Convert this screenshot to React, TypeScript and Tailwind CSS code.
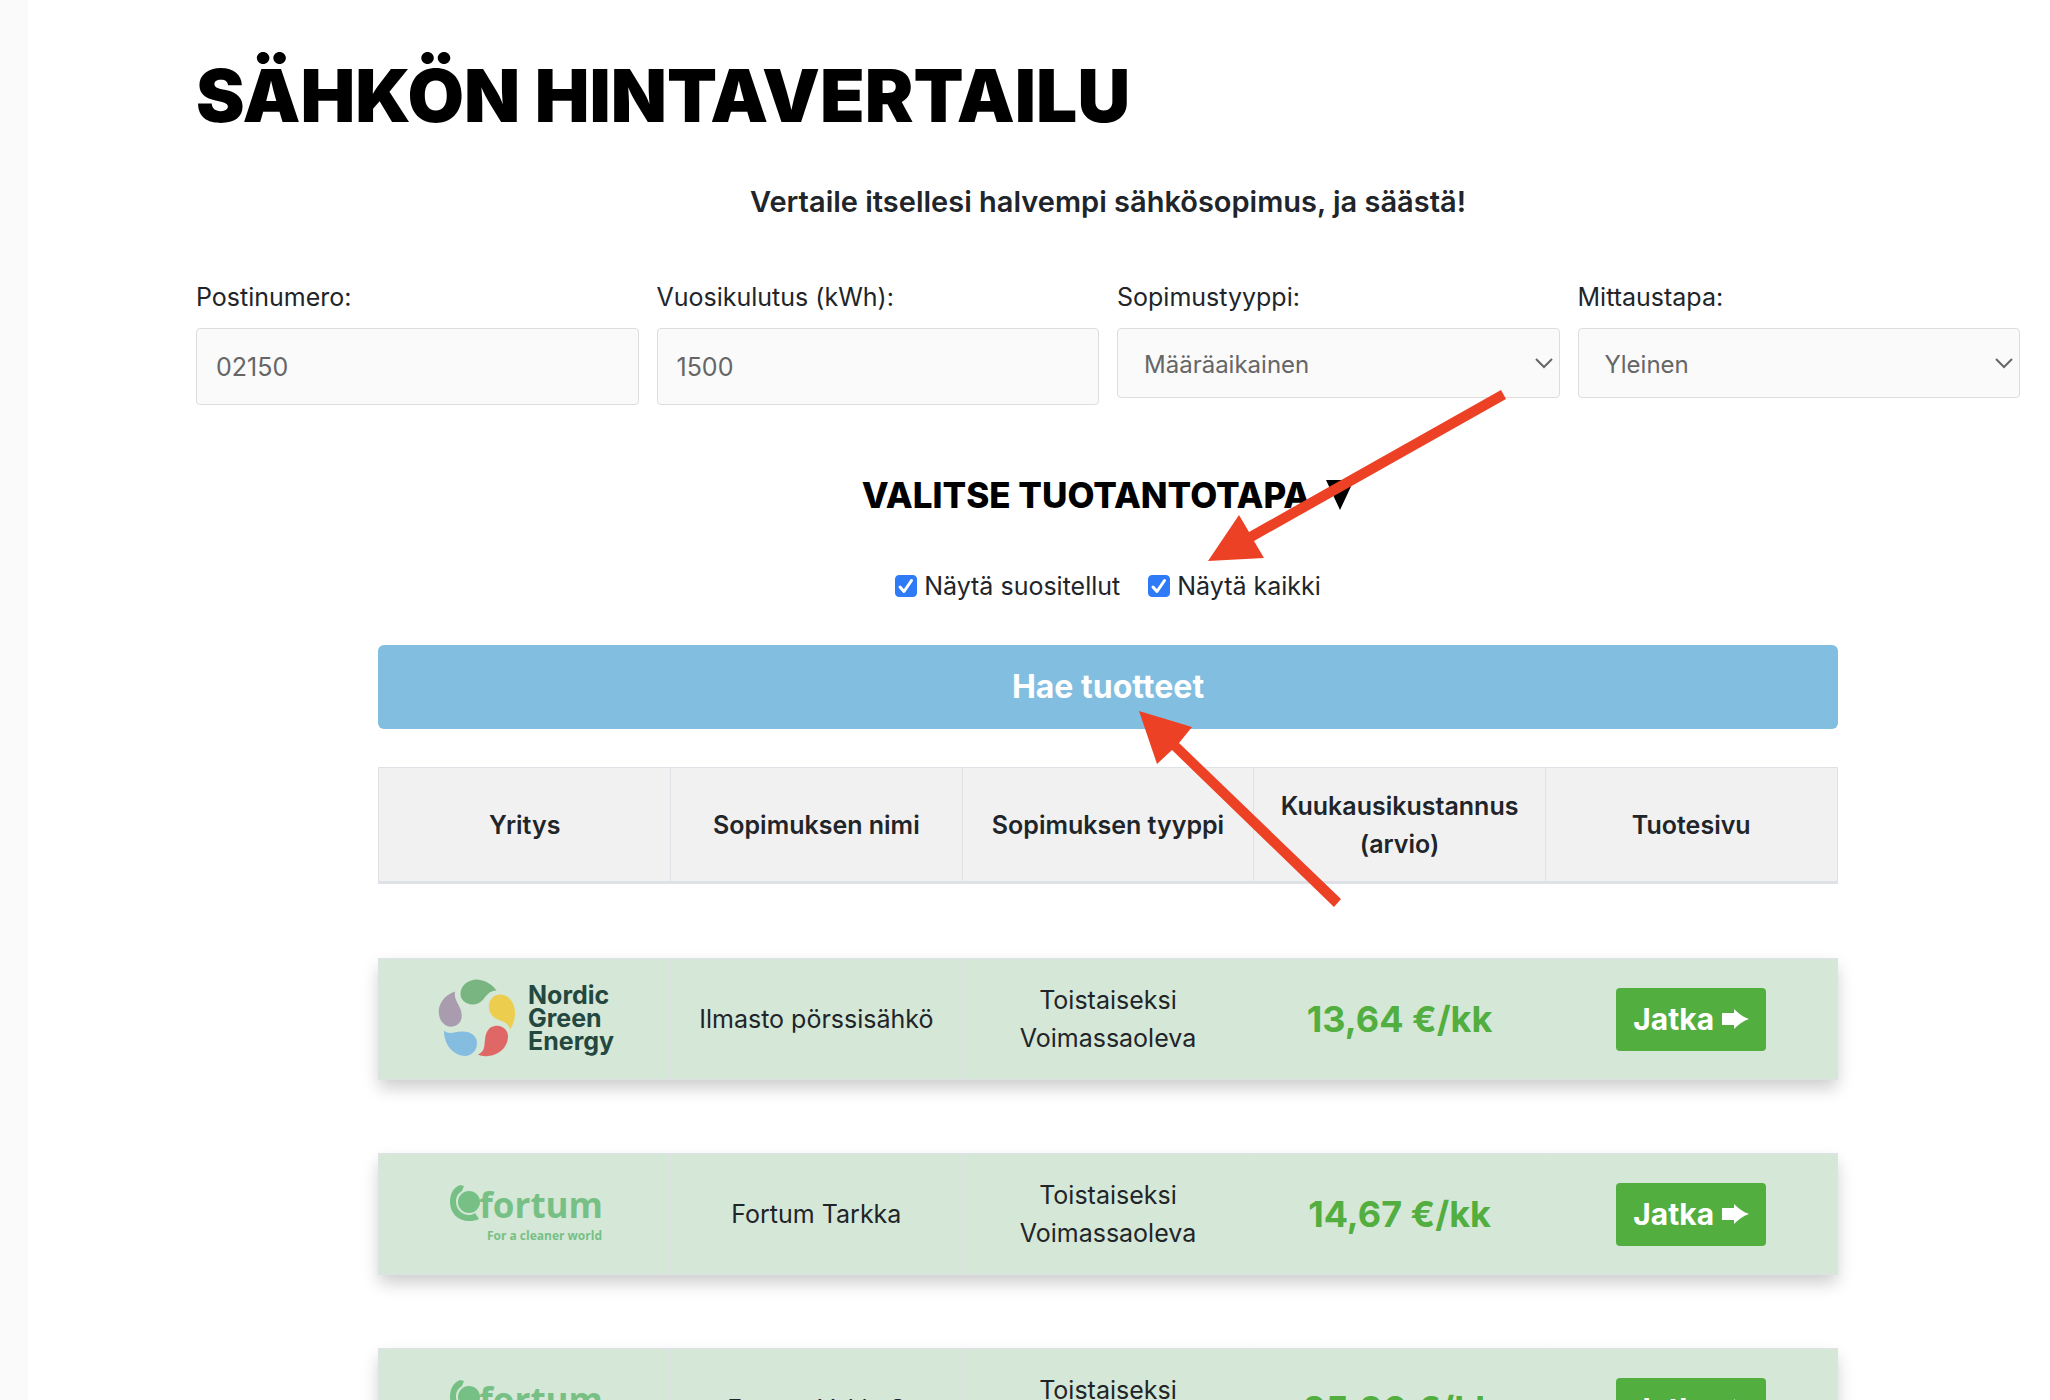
import { useState } from "react"

interface Contract {
  id: number
  company: "nordic" | "fortum"
  name: string
  type: string
  price: string
}

const contracts: Contract[] = [
  { id: 1, company: "nordic", name: "Ilmasto pörssisähkö", type: "Toistaiseksi Voimassaoleva", price: "13,64 €/kk" },
  { id: 2, company: "fortum", name: "Fortum Tarkka", type: "Toistaiseksi Voimassaoleva", price: "14,67 €/kk" },
  { id: 3, company: "fortum", name: "Fortum Vakio S", type: "Toistaiseksi Voimassaoleva", price: "25,90 €/kk" },
]

const columns = ["Yritys", "Sopimuksen nimi", "Sopimuksen tyyppi", "Kuukausikustannus (arvio)", "Tuotesivu"]

const fieldClass =
  "w-full rounded-[4px] border border-[#dddddd] bg-[#fafafa] text-[#666666] outline-none"

function NordicLogo() {
  return (
    <svg viewBox="-3 0 180 80" className="mx-auto h-20 w-[180px] overflow-visible" role="img" aria-label="Nordic Green Energy">
      <path fill="#78b581" d="M22.500 15.500C22 7 30 0.500 39 0.500C48 1 54.500 6 58.500 11.500C51 12 49 16 45.500 20C42 24.500 38 25.500 34 25.500C28 25 23 21.500 22.500 15.500Z" />
      <path fill="#edcd4e" d="M51 29C50 21 56 15.500 62 15.500C71 15.500 77 24 77 34C77 41 75 46 72 50.500C70.500 44 66 43 60 40.500C54 38 51.500 34 51 29Z" />
      <path fill="#df6867" d="M57 47C64 46 70 51 70 57C70 69 60 76.500 50 77C46 77.500 43 77 40 75.500C47 72 46 68 47 61C47.500 53 51 47.500 57 47Z" />
      <path fill="#85bde0" d="M6 51.500C11 56 16 53 23 52.500C33 52 39 57 39 64C39 72 33 77 27 77C14 76 6 65 6 51.500Z" />
      <path fill="#a89cae" d="M17 12.500C16 20 19 22 22 29C24.500 35 24 40 22 43C18 49 9 49 5 44C0 39 0 31 2 26C5 19 10 15 17 12.500Z" />
      <g fill="#24483f" fontFamily="Inter, sans-serif" fontWeight="700" fontSize="25">
        <text x="90" y="25">Nordic</text>
        <text x="90" y="48">Green</text>
        <text x="90" y="71">Energy</text>
      </g>
    </svg>
  )
}

function FortumLogo() {
  return (
    <svg viewBox="0 0 180 80" className="mx-auto h-20 w-[180px]" role="img" aria-label="Fortum">
      <circle cx="34" cy="28" r="11" fill="#77c085" />
      <path fill="#77c085" d="M25 11L29 12L27 17C22 20 21 24 21 28C21 35 27 41 34 41C36 41 38 40.500 40 39L44 45C41 46.500 38 47 34 47C23 47 15 39 15 28C15 20 18 14 25 11Z" />
      <g fill="#77c085" fontFamily="'Open Sans', sans-serif" fontWeight="700" textAnchor="end">
        <text x="168" y="44" fontSize="35">fortum</text>
        <text x="167" y="66" fontSize="12">For a cleaner world</text>
      </g>
    </svg>
  )
}

function SelectField({ id, label, options }: { id: string; label: string; options: string[] }) {
  return (
    <div>
      <label htmlFor={id} className="mb-3 block leading-[38px]">{label}</label>
      <div className="relative">
        <select id={id} className={`${fieldClass} h-[70px] appearance-none px-[26px] pt-1 text-[24px]`}>
          {options.map((option) => (
            <option key={option}>{option}</option>
          ))}
        </select>
        <svg viewBox="0 0 18 12" className="pointer-events-none absolute top-[30px] right-[7px] h-3 w-[18px]" fill="none" stroke="#666666" strokeWidth="2">
          <path d="M1 1L9 9L17 1" />
        </svg>
      </div>
    </div>
  )
}

function CheckField({ label }: { label: string }) {
  const [checked, setChecked] = useState(true)

  return (
    <label className="flex items-center gap-[7px]">
      <span className="relative h-[22px] w-[22px]">
        <input
          type="checkbox"
          checked={checked}
          onChange={(e) => setChecked(e.target.checked)}
          className="block h-[22px] w-[22px] appearance-none rounded-[4px] border border-[#2f7af6] checked:bg-[#2f7af6]"
        />
        {checked && (
          <svg viewBox="0 0 22 22" className="pointer-events-none absolute inset-0" fill="none" stroke="white" strokeWidth="3" strokeLinecap="round" strokeLinejoin="round">
            <path d="M5 12L9 16.500L16.500 5.500" />
          </svg>
        )}
      </span>
      {label}
    </label>
  )
}

export default function App() {
  return (
    <div className="relative flex h-screen overflow-hidden bg-white font-['Inter','Liberation_Sans',sans-serif] text-[25px] text-[#212529]">
      <div className="w-7 shrink-0 bg-[#fafafa]" />

      <main className="flex-1 pr-[30px] pl-[168px]">
        <h1 className="pt-[50px] text-[73px] leading-[92px] font-black text-black">SÄHKÖN HINTAVERTAILU</h1>
        <p className="mt-[38px] text-center text-[29px] leading-[44px] font-semibold">
          Vertaile itsellesi halvempi sähkösopimus, ja säästä!
        </p>

        <form onSubmit={(e) => e.preventDefault()}>
          <div className="mt-[54px] grid grid-cols-4 items-start gap-[18px]">
            <div>
              <label htmlFor="postcode" className="mb-3 block leading-[38px]">Postinumero:</label>
              <input id="postcode" defaultValue="02150" className={`${fieldClass} h-[77px] px-[19px] text-[25px]`} />
            </div>
            <div>
              <label htmlFor="usage" className="mb-3 block leading-[38px]">Vuosikulutus (kWh):</label>
              <input id="usage" defaultValue="1500" className={`${fieldClass} h-[77px] px-[19px] text-[25px]`} />
            </div>
            <SelectField id="contract" label="Sopimustyyppi:" options={["Määräaikainen", "Toistaiseksi voimassaoleva"]} />
            <SelectField id="metering" label="Mittaustapa:" options={["Yleinen", "Yösähkö"]} />
          </div>

          <h2 className="mt-[68px] flex items-center justify-center gap-4 text-[35px] leading-[44px] font-extrabold text-black">
            VALITSE TUOTANTOTAPA
            <svg viewBox="0 0 28 30" className="h-[30px] w-7">
              <path d="M0 0H28L14 30Z" />
            </svg>
          </h2>

          <div className="mt-[50px] flex justify-center gap-7 leading-[38px]">
            <CheckField label="Näytä suositellut" />
            <CheckField label="Näytä kaikki" />
          </div>

          <button type="submit" className="mx-auto mt-10 block h-[84px] w-4/5 rounded-md bg-[#82bee0] text-[32px] font-bold text-white">
            Hae tuotteet
          </button>
        </form>

        <div className="mx-auto mt-[38px] w-4/5">
          <table className="w-full table-fixed border-collapse text-center leading-[38px]">
            <thead>
              <tr className="h-[115px] bg-[#f1f1f1]">
                {columns.map((column) => (
                  <th key={column} className="border border-b-3 border-[#dee2e6] px-4 font-semibold">{column}</th>
                ))}
              </tr>
            </thead>
            {contracts.map((contract) => (
              <tbody key={contract.id} className="group">
                <tr className="h-[74px] group-nth-2:h-[76px]">
                  <td colSpan={5} />
                </tr>
                <tr className="h-[121px] bg-[#d5e7d7] shadow-[0_8px_16px_rgba(0,0,0,0.2)]">
                  <td className="border border-[#dee2e6]">
                    {contract.company === "nordic" ? <NordicLogo /> : <FortumLogo />}
                  </td>
                  <td className="border border-[#dee2e6]">{contract.name}</td>
                  <td className="border border-[#dee2e6] px-14">{contract.type}</td>
                  <td className="border border-[#dee2e6] text-[36px] font-bold text-[#52ae3e]">{contract.price}</td>
                  <td className="border border-[#dee2e6]">
                    <a href="#" className="mx-auto flex h-[63px] w-[150px] items-center justify-center gap-2 rounded-[4px] bg-[#52ae3e] text-[30px] font-bold text-white">
                      Jatka
                      <svg viewBox="0 0 27 20" className="h-5 w-[27px]" fill="white">
                        <path d="M0 4H12V0C16 4 21 8 27 10C21 12 16 16 12 20V16H0Z" />
                      </svg>
                    </a>
                  </td>
                </tr>
              </tbody>
            ))}
          </table>
        </div>
      </main>

      {/* Arrows pointing at the checkbox and the search button */}
      <svg width="2050" height="1400" className="pointer-events-none absolute top-0 left-0" fill="#ed4126">
        <path d="M1501 390L1249 532L1239 515L1208 561L1264 558L1254 541L1506 399Z" />
        <path d="M1139 711L1192 727L1179 743L1341 899L1334 907L1172 750L1157 764Z" />
      </svg>
    </div>
  )
}
